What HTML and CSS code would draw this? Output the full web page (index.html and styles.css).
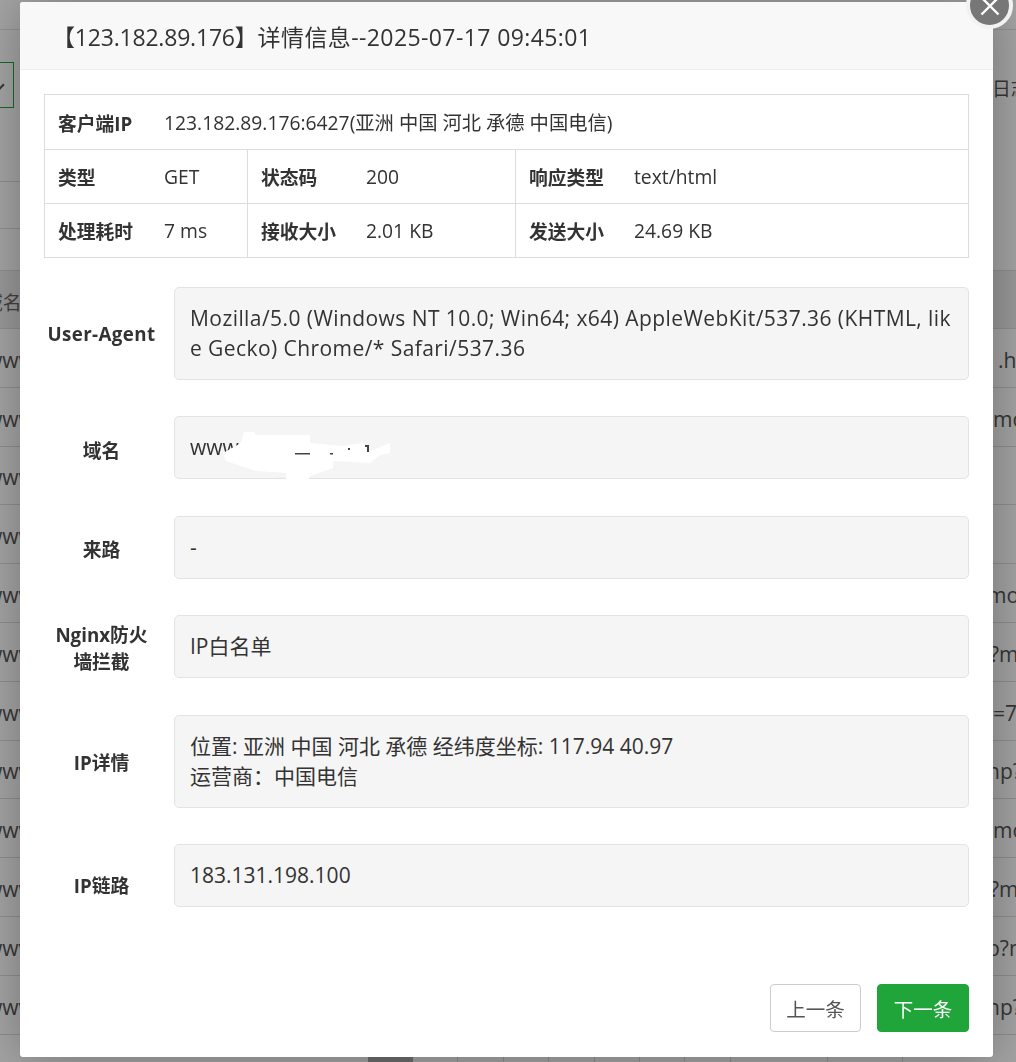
FILE: index.html
```html
<!DOCTYPE html>
<html lang="zh-CN">
<head>
<meta charset="utf-8">
<title>详情信息</title>
<link rel="stylesheet" href="styles.css">
</head>
<body>
<div class="page">
  <div class="topbar"></div>
  <div class="toolbar"><span class="selectbox"><span class="chev"></span></span><span class="logs">日志</span></div>
  <div class="band band-a"></div>
  <div class="band band-b"></div>
  <div class="thead"><span class="cut-left">域名</span></div>
  <div class="trow"><span>www</span><span class="r5">.htm</span></div>
  <div class="trow"><span>www</span><span>mod</span></div>
  <div class="trow"><span>www</span><span></span></div>
  <div class="trow"><span>www</span><span></span></div>
  <div class="trow"><span>www</span><span class="rc">mod</span></div>
  <div class="trow"><span>www</span><span class="rn">?mo</span></div>
  <div class="trow"><span>www</span><span>=77</span></div>
  <div class="trow"><span>www</span><span class="rc">np?</span></div>
  <div class="trow"><span>www</span><span>mod</span></div>
  <div class="trow"><span>www</span><span class="rn">?mo</span></div>
  <div class="trow"><span>www</span><span class="rc">p?m</span></div>
  <div class="trow"><span>www</span><span class="rc">np?</span></div>
  <div class="pager"><i class="pg on"></i><i class="pg"></i><i class="pg"></i><i class="pg"></i><i class="pg"></i><i class="pg"></i><i class="pg"></i><i class="pg"></i><i class="pg pg-w"></i><i class="pg pg-m"></i></div>
</div>
<div class="overlay"></div>
<section class="modal">
  <header class="modal-head"><span class="t-ip">【123.182.89.176】</span><span class="t-rest">详情信息--2025-07-17 09:45:01</span></header>
  <div class="modal-body">
    <div class="info">
      <div class="info-row"><div class="cell cell-full"><b>客户端IP</b><span>123.182.89.176:6427(亚洲 中国 河北 承德 中国电信)</span></div></div>
      <div class="info-row">
        <div class="cell c1"><b>类型</b><span>GET</span></div>
        <div class="cell c2"><b>状态码</b><span>200</span></div>
        <div class="cell c3"><b>响应类型</b><span>text/html</span></div>
      </div>
      <div class="info-row">
        <div class="cell c1"><b>处理耗时</b><span>7 ms</span></div>
        <div class="cell c2"><b>接收大小</b><span>2.01 KB</span></div>
        <div class="cell c3"><b>发送大小</b><span>24.69 KB</span></div>
      </div>
    </div>
    <div class="fields">
      <div class="field"><label class="lab lab-ua">User-Agent</label><div class="box tall ua">Mozilla/5.0 (Windows NT 10.0; Win64; x64) AppleWebKit/537.36 (KHTML, like Gecko) Chrome/* Safari/537.36</div></div>
      <div class="field"><label class="lab lab-s">域名</label><div class="box masked">www.exam<svg class="blob" viewBox="0 0 260 80" width="260" height="80"><path fill="#fff" d="M74 22h10l2 3h54v8l33 3 20-3 7 8 20-8v10l-10 2-10 8-37-2v7l-23 8-2 5h-22v-8l-30-2-30-10-3-8 18-10z"/><path fill="#444" d="M125 43h15v1.500h-15zM160 43h3v1.500h-3zM178 38h2v2h-2zM195 35h4v2h-4zM197 37h2v5h-2z"/></svg></div></div>
      <div class="field"><label class="lab lab-s">来路</label><div class="box">-</div></div>
      <div class="field"><label class="lab lab-n">Nginx防火<br>墙拦截</label><div class="box">IP白名单</div></div>
      <div class="field"><label class="lab lab-i">IP详情</label><div class="box tall">位置: 亚洲 中国 河北 承德 经纬度坐标: 117.94 40.97<br>运营商：中国电信</div></div>
      <div class="field"><label class="lab lab-l">IP链路</label><div class="box">183.131.198.100</div></div>
    </div>
  </div>
  <footer class="modal-foot">
    <button class="btn">上一条</button>
    <button class="btn btn-green">下一条</button>
  </footer>
</section>
<div class="close"><svg viewBox="0 0 20 20" width="20" height="20"><path d="M1.500 1.500l17 17M18.500 1.500l-17 17" stroke="#fff" stroke-width="2.400" fill="none"/></svg></div>
</body>
</html>
```
FILE: styles.css
```css
* { box-sizing: border-box; }
html, body { margin: 0; height: 100%; overflow: hidden; }
body { font-family: "Open Sans", "Noto Sans CJK SC", sans-serif; color: #333; background: #fff; font-size: 18.75px; }
.page { height: 1062px; overflow: hidden; display: flex; flex-direction: column; color: #555; font-size: 21px; }
.topbar { height: 30px; flex: none; border-bottom: 1px solid #e4e4e4; }
.toolbar { height: 152px; flex: none; padding: 32px 0 0; display: flex; justify-content: space-between; align-items: flex-start; background: linear-gradient(#ddd, #ddd) left bottom / 200px 1px no-repeat; }
.selectbox { display: block; width: 14px; height: 46px; border: 1px solid #20a53a; border-left: 0; position: relative; }
.chev { position: absolute; left: -5px; top: 18px; width: 8px; height: 8px; border-right: 2px solid #555; border-bottom: 2px solid #555; transform: rotate(45deg); }
.logs { font-size: 18.75px; margin: 12px -14px 0 0; width: 38px; color: #555; }
.band { flex: none; background: linear-gradient(#ddd, #ddd) left bottom / 200px 1px no-repeat; }
.band-a { height: 47px; }
.band-b { height: 42px; background-size: 100% 1px; }
.thead { height: 58px; flex: none; background: #eee; border-bottom: 1px solid #ddd; padding: 17px 0 0; color: #666; font-size: 18.75px; overflow: hidden; white-space: nowrap; }
.cut-left { display: block; margin-left: -16px; }
.trow { height: 58.800px; flex: none; border-bottom: 1px solid #ddd; display: flex; justify-content: space-between; align-items: center; padding-top: 4px; overflow: hidden; white-space: nowrap; font-size: 21px; }
.trow span:first-child { margin-left: -14px; }
.trow span:last-child { width: 23px; overflow: hidden; }
.trow .r5 { padding-left: 5px; }
.trow .rn { text-indent: -3px; }
.trow .rc { text-indent: -6px; }
.pager { flex: none; display: flex; padding-left: 368px; height: 40px; }
.pg { display: block; flex: none; width: 45.400px; height: 40px; border-right: 1px solid #ddd; }
.pg.on { width: 45px; background: #a8a8a8; border: 0; }
.pg.pg-w { width: 97px; }
.pg.pg-m { width: 75px; }
.overlay { position: fixed; inset: 0; background: rgba(0,0,0,.36); }
.modal { position: fixed; left: 20px; top: 2px; width: 973px; height: 1055px; background: #fff; border-radius: 3px; box-shadow: 1px 1px 50px rgba(0,0,0,.3); display: flex; flex-direction: column; }
.modal-head { height: 68px; flex: none; background: #f8f8f8; border-bottom: 1px solid #eee; border-radius: 3px 3px 0 0; padding: 0 0 0 32px; line-height: 70px; font-size: 23px; color: #333; white-space: nowrap; }
.t-ip { letter-spacing: -.2px; }
.t-rest { letter-spacing: .4px; }
.modal-body { flex: 1; padding: 24px 24px 0; }
.info { border: 1px solid #ddd; width: 925px; }
.info-row { display: flex; height: 54px; border-top: 1px solid #ddd; }
.info-row:first-child { border-top: 0; }
.cell { display: flex; align-items: center; padding-left: 13px; white-space: nowrap; }
.cell b { font-weight: 700; color: #333; }
.cell span { font-size: 19.300px; }
.cell-full { flex: 1; }
.cell-full b, .c1 b { width: 106px; flex: none; }
.c2 b { width: 105px; flex: none; }
.c3 b { width: 105px; flex: none; }
.c1 { width: 202px; }
.c2 { width: 268px; border-left: 1px solid #ddd; }
.c3 { flex: 1; border-left: 1px solid #ddd; }
.fields { display: flex; flex-direction: column; gap: 36.500px; margin-top: 28.800px; }
.field { display: flex; align-items: center; }
.lab { width: 115px; flex: none; margin-right: 15px; text-align: center; font-weight: 700; color: #333; line-height: 27px; white-space: nowrap; }
.lab-ua { letter-spacing: .4px; }
.lab-s { padding-top: 5px; }
.lab-n { padding-top: 3px; }
.lab-i { padding-top: 2px; }
.lab-l { padding-top: 20px; }
.box { flex: 1; position: relative; min-height: 63px; padding: 15px 15px; background: #f5f5f5; border: 1px solid #e3e3e3; border-radius: 5px; font-size: 21px; line-height: 30px; color: #333; word-break: break-all; }
.ua { letter-spacing: .43px; }
.tall { min-height: 93px; }
.blob { position: absolute; left: -5px; top: -7px; }
.modal-foot { flex: none; display: flex; justify-content: flex-end; gap: 16px; padding: 0 24px 25px 0; }
.btn { width: 91px; height: 48px; padding: 0; background: #fff; border: 1px solid #ccc; border-radius: 4px; color: #555; font: inherit; font-size: 19.500px; }
.btn-green { width: 92px; background: #20a53a; border-color: #20a53a; color: #fff; }
.close { position: fixed; left: 966px; top: -18px; width: 47px; height: 47px; border: 4px solid #f2f2f2; border-radius: 50%; background: #777; display: flex; align-items: center; justify-content: center; }
```
